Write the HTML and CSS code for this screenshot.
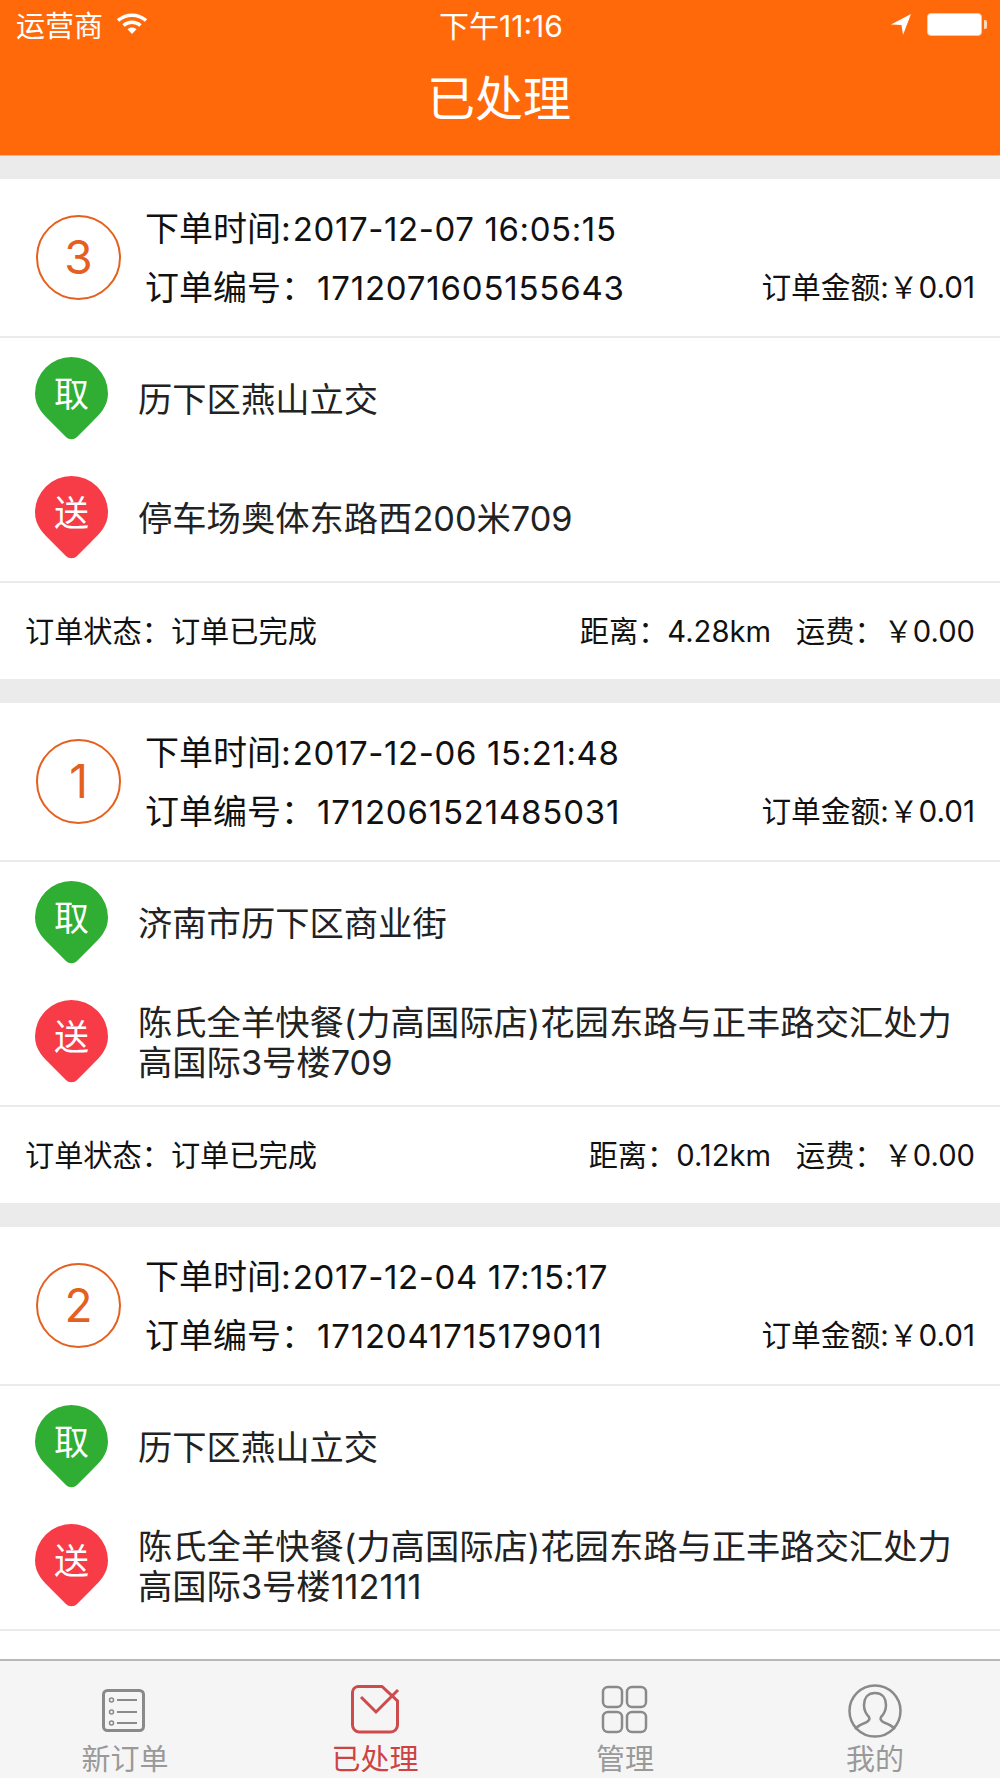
FILE: index.html
```html
<!DOCTYPE html>
<html lang="zh-CN">
<head>
    <meta charset="UTF-8">
    <meta name="viewport" content="width=device-width, initial-scale=1.0">
    <title>已处理</title>
    <link rel="stylesheet" href="styles.css">
</head>
<body>
    <div class="page">
        <header class="top">
            <div class="status">
                <div class="status-left">
                    <span>运营商</span>
                    <svg class="wifi" width="30" height="22" viewBox="0 0 30 22">
                        <path d="M1 7.5C9 0.5 21 0.5 29 7.5" fill="none" stroke="#fff" stroke-width="3.4"/>
                        <path d="M6.5 12.5C11.5 8.2 18.5 8.2 23.5 12.5" fill="none" stroke="#fff" stroke-width="3.4"/>
                        <path d="M10.5 16.2C13 14 17 14 19.5 16.2L15 21Z" fill="#fff"/>
                    </svg>
                </div>
                <div class="status-time">下午11:16</div>
                <div class="status-right">
                    <svg width="20" height="21" viewBox="0 0 20 21">
                        <path d="M0 10.5L20 0L12 21L10.5 11Z" fill="#fff"/>
                    </svg>
                    <div class="battery"></div>
                </div>
            </div>
            <h1 class="title">已处理</h1>
        </header>

        <main class="list">
            <section class="card">
                <div class="card-head">
                    <div class="num">3</div>
                    <div class="head-info">
                        <div class="time">下单时间:<span class="n">2017-12-07 16:05:15</span></div>
                        <div class="head-line">
                            <div class="code">订单编号：<span class="n">1712071605155643</span></div>
                            <div class="amount">订单金额:￥0.01</div>
                        </div>
                    </div>
                </div>
                <div class="addrs">
                    <div class="addr">
                        <svg class="pin" width="73" height="83" viewBox="0 0 73 83"><path class="pin-green" d="M36.500 0A36.500 36.500 0 0 1 73 36.500C73 50 64 58 57 65L42 80C39 83 34 83 31 80L16 65C9 58 0 50 0 36.500A36.500 36.500 0 0 1 36.500 0Z"/><text x="36.500" y="50" class="pin-text">取</text></svg>
                        <p>历下区燕山立交</p>
                    </div>
                    <div class="addr">
                        <svg class="pin" width="73" height="83" viewBox="0 0 73 83"><path class="pin-red" d="M36.500 0A36.500 36.500 0 0 1 73 36.500C73 50 64 58 57 65L42 80C39 83 34 83 31 80L16 65C9 58 0 50 0 36.500A36.500 36.500 0 0 1 36.500 0Z"/><text x="36.500" y="50" class="pin-text">送</text></svg>
                        <p>停车场奥体东路西200米709</p>
                    </div>
                </div>
                <div class="card-foot">
                    <div>订单状态：订单已完成</div>
                    <div>距离：4.28km<span class="fee">运费：￥0.00</span></div>
                </div>
            </section>

            <section class="card">
                <div class="card-head">
                    <div class="num">1</div>
                    <div class="head-info">
                        <div class="time">下单时间:<span class="n">2017-12-06 15:21:48</span></div>
                        <div class="head-line">
                            <div class="code">订单编号：<span class="n">1712061521485031</span></div>
                            <div class="amount">订单金额:￥0.01</div>
                        </div>
                    </div>
                </div>
                <div class="addrs">
                    <div class="addr">
                        <svg class="pin" width="73" height="83" viewBox="0 0 73 83"><path class="pin-green" d="M36.500 0A36.500 36.500 0 0 1 73 36.500C73 50 64 58 57 65L42 80C39 83 34 83 31 80L16 65C9 58 0 50 0 36.500A36.500 36.500 0 0 1 36.500 0Z"/><text x="36.500" y="50" class="pin-text">取</text></svg>
                        <p>济南市历下区商业街</p>
                    </div>
                    <div class="addr">
                        <svg class="pin" width="73" height="83" viewBox="0 0 73 83"><path class="pin-red" d="M36.500 0A36.500 36.500 0 0 1 73 36.500C73 50 64 58 57 65L42 80C39 83 34 83 31 80L16 65C9 58 0 50 0 36.500A36.500 36.500 0 0 1 36.500 0Z"/><text x="36.500" y="50" class="pin-text">送</text></svg>
                        <p>陈氏全羊快餐(力高国际店)花园东路与正丰路交汇处力高国际3号楼709</p>
                    </div>
                </div>
                <div class="card-foot">
                    <div>订单状态：订单已完成</div>
                    <div>距离：0.12km<span class="fee">运费：￥0.00</span></div>
                </div>
            </section>

            <section class="card">
                <div class="card-head">
                    <div class="num">2</div>
                    <div class="head-info">
                        <div class="time">下单时间:<span class="n">2017-12-04 17:15:17</span></div>
                        <div class="head-line">
                            <div class="code">订单编号：<span class="n">1712041715179011</span></div>
                            <div class="amount">订单金额:￥0.01</div>
                        </div>
                    </div>
                </div>
                <div class="addrs">
                    <div class="addr">
                        <svg class="pin" width="73" height="83" viewBox="0 0 73 83"><path class="pin-green" d="M36.500 0A36.500 36.500 0 0 1 73 36.500C73 50 64 58 57 65L42 80C39 83 34 83 31 80L16 65C9 58 0 50 0 36.500A36.500 36.500 0 0 1 36.500 0Z"/><text x="36.500" y="50" class="pin-text">取</text></svg>
                        <p>历下区燕山立交</p>
                    </div>
                    <div class="addr">
                        <svg class="pin" width="73" height="83" viewBox="0 0 73 83"><path class="pin-red" d="M36.500 0A36.500 36.500 0 0 1 73 36.500C73 50 64 58 57 65L42 80C39 83 34 83 31 80L16 65C9 58 0 50 0 36.500A36.500 36.500 0 0 1 36.500 0Z"/><text x="36.500" y="50" class="pin-text">送</text></svg>
                        <p>陈氏全羊快餐(力高国际店)花园东路与正丰路交汇处力高国际3号楼112111</p>
                    </div>
                </div>
                <div class="card-foot"></div>
            </section>
        </main>

        <nav class="tabs">
            <a class="tab">
                <svg width="50" height="50" viewBox="0 0 50 50" fill="none" stroke="#8a8a8a">
                    <rect x="3.500" y="5.500" width="40" height="40" rx="4" stroke-width="3"/>
                    <circle cx="11.500" cy="15" r="2" stroke-width="1.500"/>
                    <circle cx="11.500" cy="27" r="2" stroke-width="1.500"/>
                    <circle cx="11.500" cy="38" r="2" stroke-width="1.500"/>
                    <path d="M17 15H37M17 27H37M17 38H37" stroke-width="2"/>
                </svg>
                <span>新订单</span>
            </a>
            <a class="tab tab-on">
                <svg width="50" height="50" viewBox="0 0 50 50" fill="none" stroke="#cd4b4b" stroke-width="3">
                    <path d="M8 1.500H32L47.500 16V40A7 7 0 0 1 40.500 47H9A7 7 0 0 1 2.500 40V7A6 6 0 0 1 8 1.500Z"/>
                    <path d="M11 12L26 27L48 5"/>
                </svg>
                <span>已处理</span>
            </a>
            <a class="tab">
                <svg width="50" height="50" viewBox="0 0 50 50" fill="none" stroke="#8a8a8a" stroke-width="2.500">
                    <rect x="3" y="2" width="19" height="20" rx="5"/>
                    <rect x="27" y="2" width="19" height="20" rx="5"/>
                    <rect x="3" y="27" width="19" height="20" rx="5"/>
                    <rect x="27" y="27" width="19" height="20" rx="5"/>
                </svg>
                <span>管理</span>
            </a>
            <a class="tab tab-me">
                <svg width="54" height="54" viewBox="0 0 54 54" fill="none" stroke="#8a8a8a" stroke-width="2.500">
                    <circle cx="27" cy="27" r="25.500"/>
                    <path d="M27 9C19 9 16 15 16 21C16 26 18 30 21 33C22 35 21 37 18 38.500C14 40 10 42 7 45M27 9C35 9 38 15 38 21C38 26 36 30 33 33C32 35 33 37 36 38.500C40 40 44 42 47 45"/>
                </svg>
                <span>我的</span>
            </a>
        </nav>
    </div>
</body>
</html>
```

FILE: styles.css
```css
* {
    box-sizing: border-box;
}

body {
    margin: 0;
    padding: 0;
    font-family: Inter, "Noto Sans CJK SC", sans-serif;
    color: #111;
    background-color: #ebebeb;
}

.page {
    display: flex;
    flex-direction: column;
    height: 1778px;
    overflow: hidden;
}

/* Orange top */
.top {
    flex: none;
    height: 156px;
    background-color: #ff690a;
    border-bottom: 1px solid #f3b48d;
    color: white;
}

.status {
    display: flex;
    justify-content: space-between;
    align-items: center;
    height: 48px;
    padding: 0 14px 0 16px;
    font-size: 29px;
}

.status-left,
.status-right {
    display: flex;
    align-items: center;
    flex: 1;
}

.status-left {
    gap: 14px;
}

.status-right {
    justify-content: flex-end;
    gap: 16px;
}

.status-time {
    font-size: 30px;
}

.battery {
    position: relative;
    width: 55px;
    height: 23px;
    background-color: white;
    border: 1px solid #f8c8a0;
    border-radius: 4px;
    margin-right: 4px;
}

.battery::after {
    content: "";
    position: absolute;
    right: -6px;
    top: 6px;
    width: 3px;
    height: 9px;
    background-color: #fbd9bd;
    border-radius: 0 2px 2px 0;
}

.title {
    margin: 0;
    padding-right: 2px;
    text-align: center;
    font-size: 48px;
    font-weight: normal;
    line-height: 102px;
}

/* Order cards */
.list {
    flex: 1;
    min-height: 0;
    overflow: hidden;
    padding-top: 23px;
}

.card {
    background-color: white;
    margin-bottom: 24px;
}

.card-head {
    display: flex;
    height: 159px;
    padding: 0 25px 0 36px;
    border-bottom: 2px solid #ebebeb;
}

.num {
    flex: none;
    width: 85px;
    height: 85px;
    margin-top: 36px;
    border: 2px solid #e4601f;
    border-radius: 50%;
    color: #e4601f;
    font-size: 46px;
    line-height: 81px;
    text-align: center;
}

.head-info {
    flex: 1;
    padding: 30px 0 0 24px;
}

.time {
    font-size: 34px;
    line-height: 40px;
}

.head-line {
    display: flex;
    justify-content: space-between;
    align-items: center;
    margin-top: 15px;
}

.code {
    font-size: 34px;
    line-height: 40px;
}

.n {
    margin-left: 2px;
    font-size: 33px;
    letter-spacing: 0.6px;
}

.code .n {
    letter-spacing: 0.8px;
}

.amount {
    padding-bottom: 5px;
    font-size: 29.7px;
}

.addrs {
    height: 245px;
    padding-top: 1px;
    border-bottom: 2px solid #ebebeb;
}

.addr {
    display: flex;
    align-items: center;
    height: 119px;
    padding: 0 30px 0 35px;
}

.pin {
    flex: none;
    margin-right: 30px;
}

.pin-green {
    fill: #2fae33;
}

.pin-red {
    fill: #f73b47;
}

.pin-text {
    fill: white;
    font-size: 35px;
    text-anchor: middle;
}

.addr p {
    margin: 0;
    padding-top: 2px;
    font-size: 34.3px;
    line-height: 40px;
    color: #222;
}

.card-foot {
    display: flex;
    justify-content: space-between;
    align-items: center;
    height: 96px;
    padding: 0 25px 4px;
    font-size: 29.2px;
}

.fee {
    margin-left: 25px;
}

/* Bottom tabs */
.tabs {
    flex: none;
    display: grid;
    grid-template-columns: repeat(4, 1fr);
    height: 119px;
    background-color: #f5f5f5;
    border-top: 2px solid #b8b8b8;
}

.tab {
    display: flex;
    flex-direction: column;
    align-items: center;
    justify-content: flex-end;
    gap: 7px;
    padding-bottom: 0;
    color: #999;
    font-size: 29px;
    line-height: 36px;
}

.tab-me {
    gap: 4px;
}

.tab-on {
    color: #cd4343;
}
```
